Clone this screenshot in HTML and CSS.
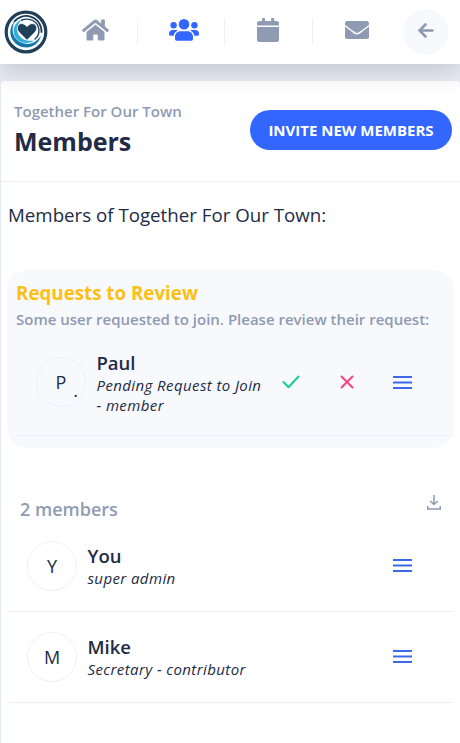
FILE: index.html
```html
<!DOCTYPE html>
<html lang="en">
<head>
<meta charset="utf-8">
<title>Members</title>
<link rel="stylesheet" href="styles.css">
</head>
<body>
<header class="topbar">
  <a class="logo">
    <svg width="44" height="44" viewBox="0 0 44 44">
      <circle cx="22" cy="22" r="19.800" fill="#fff" stroke="#20405a" stroke-width="3.200"/>
      <path d="M10 12C14 6.500 21 4.800 27 6.800c7 2.200 11 8.700 10.500 16" fill="none" stroke="#20405a" stroke-width="1.800"/>
      <path d="M17 10.500c6-3 13.500-1 16.500 4.500 3 5.500 1.500 11.500-3 14.500" fill="none" stroke="#20405a" stroke-width="1.400"/>
      <path d="M11 11C5.500 16 5 24.500 9 30.500c4 6 12 8.500 18.500 6 5-2 8.500-6 9.500-11-4 6-9 9-15 8.300C14 33 8.800 27 8.600 20c0-3.500.9-6.500 2.400-9z" fill="#1576a8"/>
      <path d="M18 9.500c-5.500 2-9 7-8.300 13C10.500 29 16 33.200 22.500 33c3.500 0 6-1 8-2.500-6 1-11.500 0-14.800-4.200C12 21.500 12.500 14.500 18 9.500z" fill="#35addb"/>
      <path d="M23 30.300L14.800 22c-4-4.500.5-10.800 5.700-7.600.9.500 1.900 1.400 2.500 2.200.6-.8 1.600-1.700 2.500-2.200 5.200-3.200 9.700 3.100 5.700 7.600z" fill="#20405a" stroke="#fff" stroke-width=".8"/>
    </svg>
  </a>
  <nav class="nav">
    <a class="nav-item home">
      <svg width="27" height="24" viewBox="0 0 576 512" fill="currentColor"><path d="M280.400 148.300L96 300.100V464a16 16 0 0 0 16 16l112.100-.3a16 16 0 0 0 15.900-16V368a16 16 0 0 1 16-16h64a16 16 0 0 1 16 16v95.600a16 16 0 0 0 16 16.100L464 480a16 16 0 0 0 16-16V300L295.700 148.300a12.200 12.200 0 0 0-15.300 0zM571.600 251.500L488 182.600V44a12 12 0 0 0-12-12h-56a12 12 0 0 0-12 12v72.600L318.500 43a48 48 0 0 0-61 0L4.300 251.500a12 12 0 0 0-1.600 16.900l25.500 31a12 12 0 0 0 16.900 1.600L280.400 107.200a12.200 12.200 0 0 1 15.300 0L530.900 301a12 12 0 0 0 16.900-1.600l25.500-31a12 12 0 0 0-1.700-16.900z"/></svg>
    </a>
    <a class="nav-item users active">
      <svg width="30" height="22" viewBox="0 0 30 22" fill="currentColor"><circle cx="15" cy="5.300" r="5.300"/><circle cx="4.600" cy="6.300" r="3.200"/><circle cx="25.400" cy="6.300" r="3.200"/><path d="M11.500 12.300h7c3.200 0 5.500 2.400 5.500 5.500V20c0 1.100-.9 1.800-1.900 1.800H7.900C6.900 21.800 6 21.100 6 20v-2.200c0-3.100 2.300-5.500 5.500-5.500zM3.500 11h3.200c.8 0 1.500.1 2 .5-2.100 1-3.600 2.800-4 5.200H1.500C.6 16.700 0 16.100 0 15.200v-.7C0 12.500 1.500 11 3.500 11zM26.500 11h-3.200c-.8 0-1.500.1-2 .5 2.100 1 3.600 2.800 4 5.200h3.200c.9 0 1.500-.6 1.500-1.500v-.7c0-2-1.500-3.500-3.500-3.500z"/></svg>
    </a>
    <a class="nav-item calendar">
      <svg width="22" height="24" viewBox="0 0 22 24" fill="currentColor"><path d="M2.300 3H5V.8c0-.5.300-.8.800-.8h1.500c.5 0 .8.300.8.800V3h6V.8c0-.5.300-.8.800-.8h1.500c.5 0 .8.300.8.800V3h2.500C21 3 22 4 22 5.300V7.500H0V5.300C0 4 1 3 2.300 3zM0 9h22v12.700c0 1.300-1 2.300-2.300 2.300H2.300C1 24 0 23 0 21.700z"/></svg>
    </a>
    <a class="nav-item mail">
      <svg width="24" height="18" viewBox="0 0 24 18" fill="currentColor"><path d="M2.300 0h19.400C23 0 24 1 24 2.300v1.400c-1.500 1.300-4 3.200-8.300 6.300-1 .7-2.500 1.900-3.700 1.900S9.300 10.700 8.300 10C4 6.900 1.500 5 0 3.700V2.300C0 1 1 0 2.300 0zM0 5.600c1.500 1.200 4 3.100 7.400 5.600 1.200.9 2.800 2.200 4.600 2.200s3.400-1.300 4.600-2.200C20 8.700 22.500 6.800 24 5.600v10.100c0 1.300-1 2.300-2.300 2.300H2.300C1 18 0 17 0 15.700z"/></svg>
    </a>
  </nav>
  <button class="back">
    <svg width="16" height="15" viewBox="0 0 16 15" fill="none" stroke="currentColor" stroke-width="2.600" stroke-linecap="round" stroke-linejoin="round"><path d="M14.500 7.500H1.500M7.500 1.500L1.500 7.500l6 6"/></svg>
  </button>
</header>

<main class="card">
  <div class="card-header">
    <div>
      <div class="group">Together For Our Town</div>
      <h1 class="title">Members</h1>
    </div>
    <button class="invite">INVITE NEW MEMBERS</button>
  </div>
  <div class="card-body">
    <p class="intro">Members of Together For Our Town:</p>

    <section class="requests">
      <h2 class="requests-title">Requests to Review</h2>
      <p class="requests-note">Some user requested to join. Please review their request:</p>
      <div class="row request">
        <div class="avatar">P<span class="status">.</span></div>
        <div class="who"><div class="name">Paul</div><div class="role">Pending Request to Join - member</div></div>
        <div class="actions">
          <svg width="18" height="14" viewBox="0 0 18 14" fill="none" stroke="#19d18f" stroke-width="2" stroke-linecap="round" stroke-linejoin="round"><path d="M1.500 7l5 5.200L16.500 1.500"/></svg>
          <svg width="14" height="14" viewBox="0 0 14 14" fill="none" stroke="#f5457c" stroke-width="2" stroke-linecap="round"><path d="M1.500 1.500l11 11M12.500 1.500l-11 11"/></svg>
          <svg class="menu" width="19" height="13" viewBox="0 0 19 13"><path d="M0 0h19v2H0zM0 5.500h19v2H0zM0 11h19v2H0z"/></svg>
        </div>
      </div>
    </section>

    <div class="list-head">
      <span class="count">2 members</span>
      <svg class="download" width="14" height="15" viewBox="0 0 14 15" fill="none" stroke="#8f9bb3" stroke-width="1.500"><path d="M7 0v9M3.200 6L7 9.500 10.800 6M.75 11v3h12.500v-3"/></svg>
    </div>
    <div class="row">
      <div class="avatar">Y</div>
      <div class="who"><div class="name">You</div><div class="role">super admin</div></div>
      <svg class="menu" width="19" height="13" viewBox="0 0 19 13"><path d="M0 0h19v2H0zM0 5.500h19v2H0zM0 11h19v2H0z"/></svg>
    </div>
    <div class="row">
      <div class="avatar">M</div>
      <div class="who"><div class="name">Mike</div><div class="role">Secretary - contributor</div></div>
      <svg class="menu" width="19" height="13" viewBox="0 0 19 13"><path d="M0 0h19v2H0zM0 5.500h19v2H0zM0 11h19v2H0z"/></svg>
    </div>
  </div>
</main>
</body>
</html>
```
FILE: styles.css
```css
* { box-sizing: border-box; }
html, body { height: 100%; }
body {
  margin: 0;
  display: flex;
  flex-direction: column;
  overflow: hidden;
  background: #e9edf4;
  color: #222b45;
  font-family: "Open Sans", sans-serif;
}
h1, h2, p { margin: 0; }
svg { display: block; flex: none; }
button { border: 0; padding: 0; font-family: inherit; }

.topbar {
  position: relative;
  z-index: 1;
  flex: none;
  height: 64px;
  display: flex;
  align-items: center;
  padding-right: 11px;
  background: #fff;
  box-shadow: 0 8px 24px rgba(44, 51, 73, .2);
}
.logo { margin: 0 1px 1px 4px; }
.nav { display: flex; flex: 1; }
.nav-item {
  width: 87.500px;
  height: 27px;
  margin-bottom: 2px;
  display: flex;
  align-items: center;
  justify-content: center;
  color: #8f9bb3;
}
.nav-item + .nav-item { border-left: 1px solid #edf1f7; }
.nav-item.home { padding: 0 0 2px 6px; }
.nav-item.users { padding: 0 0 2px 7px; }
.nav-item.calendar { padding: 0 0 2px 0; }
.nav-item.mail { padding: 0 0 2px 2px; }
.nav-item.active { color: #36f; }
.back {
  flex: none;
  width: 46px;
  height: 46px;
  border-radius: 50%;
  display: flex;
  align-items: center;
  justify-content: center;
  background: #f7f9fc;
  color: #8f9bb3;
  padding-bottom: 3px;
}

.card {
  flex: 1;
  margin-top: 17px;
  background: #fff;
  border-left: 1px solid #e4e9f2;
  border-radius: 4px 4px 0 0;
}
.card-header {
  height: 101px;
  display: flex;
  align-items: center;
  justify-content: space-between;
  padding: 0 8px 3px 13px;
  border-bottom: 1px solid #edf1f7;
}
.group { font-size: 15px; line-height: 22px; font-weight: 600; color: #8f9bb3; }
.title { font-size: 25px; line-height: 38px; font-weight: 700; }
.invite {
  width: 202px;
  height: 40px;
  border-radius: 20px;
  background: #36f;
  color: #fff;
  font-size: 15px;
  font-weight: 700;
}
.card-body { padding: 21px 6px 0 6px; }
.intro { padding-left: 1px; font-size: 18.720px; line-height: 24px; }

.requests {
  height: 178px;
  margin-top: 43px;
  padding: 11px 0 0 9px;
  border-radius: 20px;
  background: #f7f9fc;
}
.requests-title { font-size: 18.750px; line-height: 24px; font-weight: 700; color: #fdbf16; }
.requests-note { font-size: 15px; line-height: 24px; margin-top: 2px; font-weight: 600; color: #8f9bb3; }
.row {
  height: 91px;
  display: flex;
  align-items: center;
  padding: 0 42px 0 20px;
  border-bottom: 1px solid #edf1f7;
}
.request { height: 105px; padding: 0 42px 2px 20px; }
.avatar {
  position: relative;
  flex: none;
  width: 50px;
  height: 50px;
  border: 1px solid #edf1f7;
  border-radius: 50%;
  font-size: 18px;
  line-height: 48px;
  text-align: center;
}
.status { position: absolute; right: 7px; top: 8px; }
.who { flex: 1; margin-left: 10.500px; padding-bottom: 1px; }
.name { font-size: 18.500px; line-height: 24px; font-weight: 600; }
.role { font-size: 15px; line-height: 20px; letter-spacing: .4px; font-style: italic; }
.request .who { flex: 0 0 169.500px; margin-left: 10.500px; padding: 1px 0 0; }
.actions { flex: 1; display: flex; align-items: center; justify-content: space-between; margin-left: 16px; }
.row > .menu { margin-bottom: 2px; }
.menu { fill: #3c69e7; }
.list-head {
  height: 73px;
  display: flex;
  align-items: flex-end;
  justify-content: space-between;
  padding: 0 13px 0 13px;
}
.count { font-size: 18px; line-height: 24px; font-weight: 600; color: #8f9bb3; }
.download { margin-bottom: 11px; }
```
